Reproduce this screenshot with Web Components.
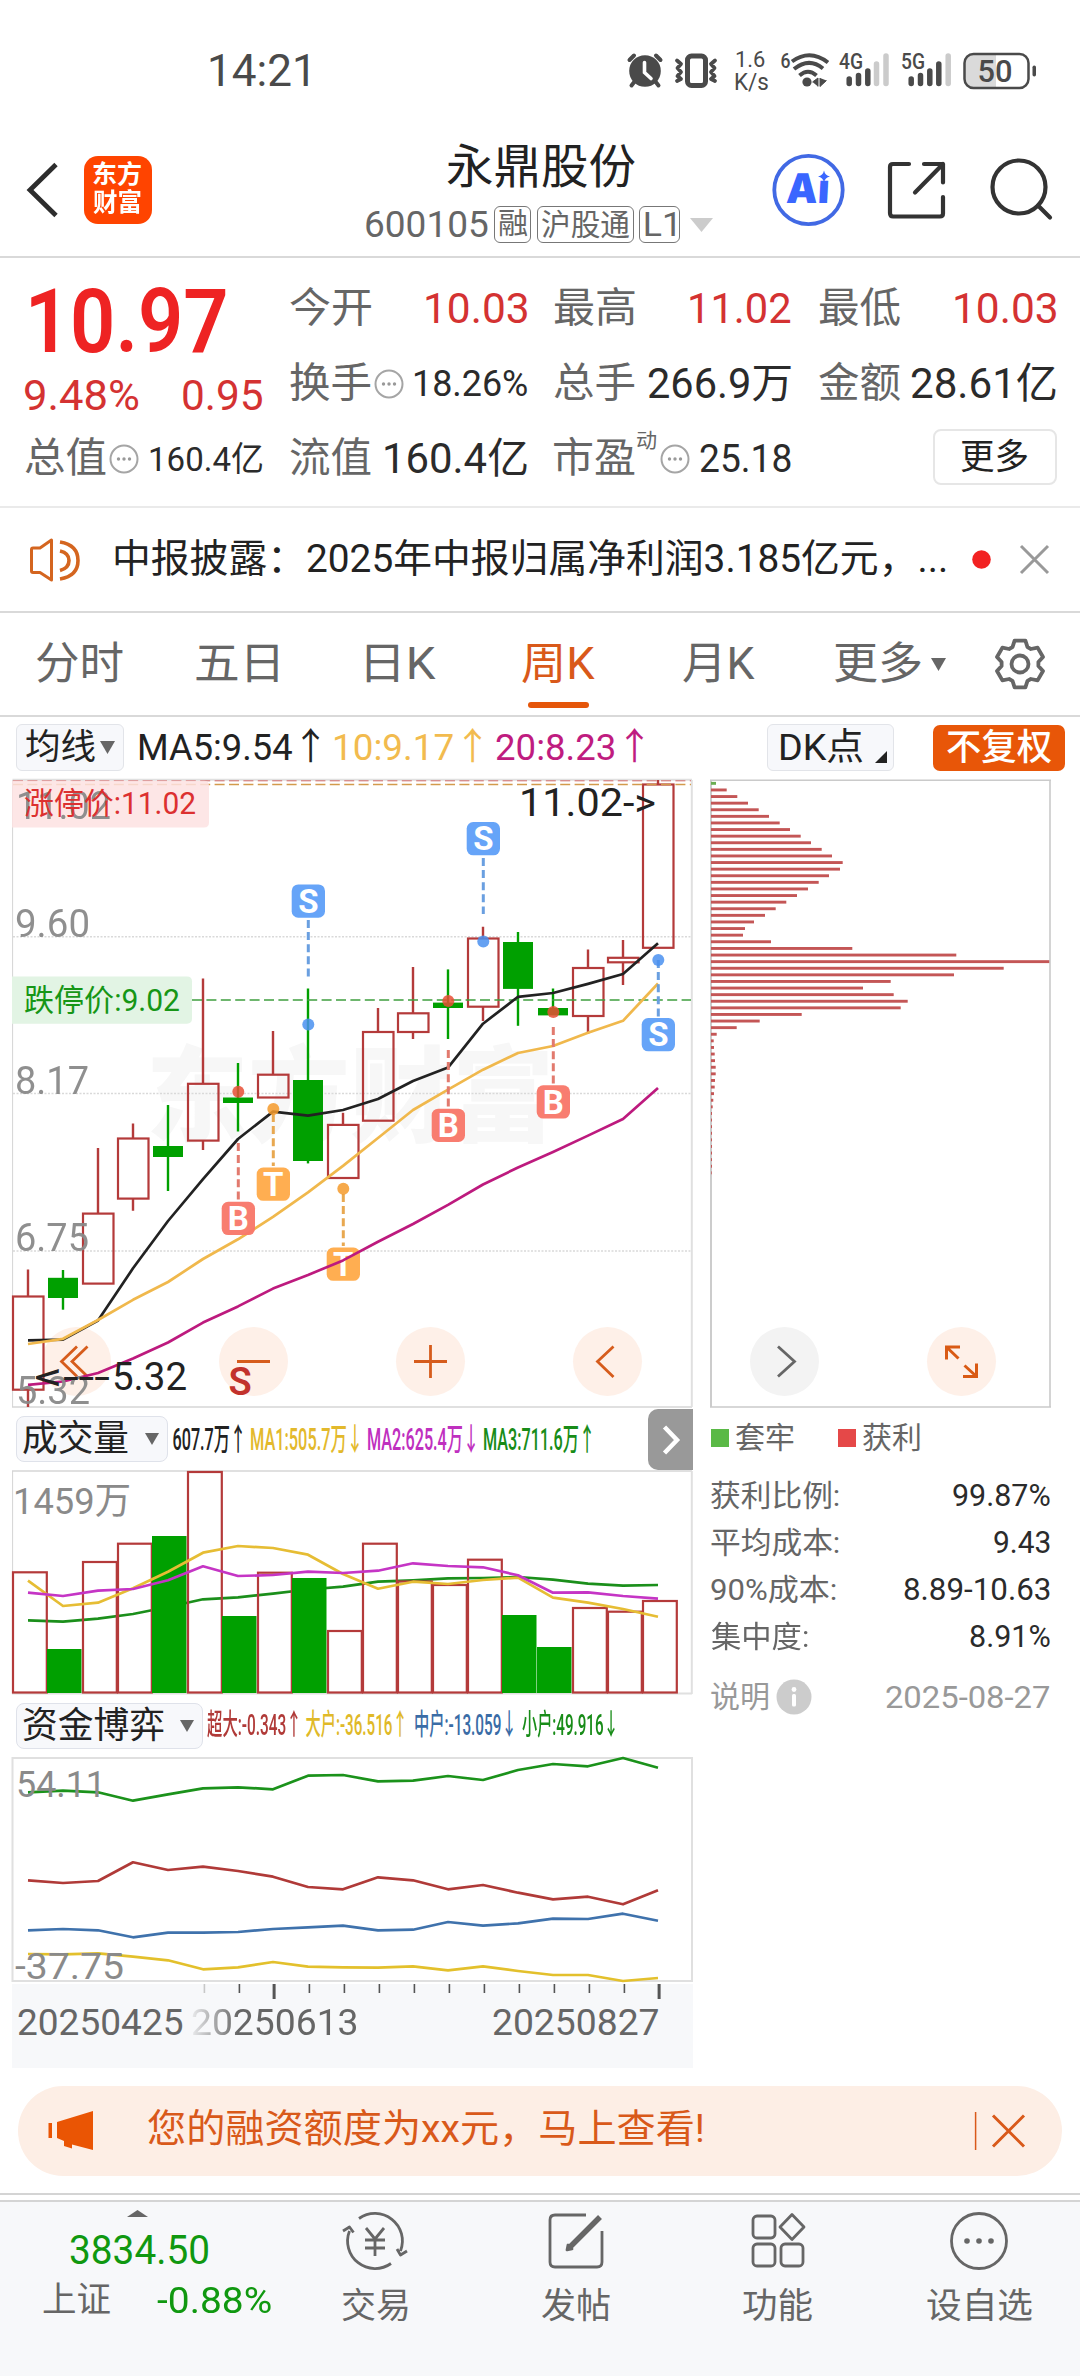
<!DOCTYPE html>
<html lang="zh-CN">
<head>
<meta charset="utf-8">
<title>永鼎股份 600105</title>
<style>
html,body{margin:0;padding:0;background:#fff}
body{width:1080px;height:2376px;overflow:hidden;font-family:Roboto,"Noto Sans CJK SC",sans-serif;color:#222}
</style>
</head>
<body>
<stock-app></stock-app>
<script>
const FONT='Roboto,"Noto Sans CJK SC",sans-serif';
const BASE=':host,*{box-sizing:border-box}svg{display:block;flex:none;overflow:visible}';
function define(name,html,init){
  customElements.define(name,class extends HTMLElement{
    connectedCallback(){
      if(this.shadowRoot)return;
      const r=this.attachShadow({mode:'open'});
      r.innerHTML=typeof html==='function'?html(this):html;
      if(init)init(this,r);
    }
  });
}
const ctx=document.createElement('canvas').getContext('2d');

/* Text whose visible ink is fitted to a width: w = width, s = size, g = gap before, c = colour, b = weight */
customElements.define('fit-text',class extends HTMLElement{
  connectedCallback(){
    if(this.shadowRoot)return;
    const a=k=>this.getAttribute(k),w=+a('w'),s=+a('s'),b=a('b')||400;
    const r=this.attachShadow({mode:'open'});
    const t=this.textContent.trim();
    ctx.font=`${b} ${s}px ${FONT}`;
    const m=ctx.measureText(t),ink=m.actualBoundingBoxRight+m.actualBoundingBoxLeft;
    const k=w/ink,dx=m.actualBoundingBoxLeft*k;
    r.innerHTML=`<style>:host{display:block;flex:none;width:${w}px;height:${s}px;margin-left:${a('g')||0}px;font-size:${s}px;line-height:${s}px;font-weight:${b};${a('c')?`color:${a('c')};`:''}white-space:nowrap}span{display:inline-block;transform-origin:0 0;transform:translateX(${dx}px) scaleX(${k})}</style><span><slot></slot></span>`;
  }
});

define('status-bar',`<style>${BASE}:host{display:flex;height:142px;padding-left:210px;align-items:center;color:#4a4a4a}
.k{display:flex;flex-direction:column;margin-left:17px}</style>
<fit-text w="98" s="44">14:21</fit-text>
<svg style="margin-left:318px" width="37" height="38" viewBox="625 51 37 38" fill="#4a4a4a"><circle cx="644" cy="70" r="15.8"/><g stroke="#4a4a4a" stroke-width="4" stroke-linecap="round"><path d="M628.500 59L633 54.500M659.500 59L655 54.500M634 80L630.500 84.500M654 80L657.500 84.500"/></g><path d="M643.500 61.500V71.500L650 77.500" stroke="#fff" stroke-width="3.600" fill="none" stroke-linecap="round"/></svg>
<svg style="margin-left:11px" width="44" height="38" viewBox="673 51 44 38" fill="none" stroke="#4a4a4a" stroke-width="3.800" stroke-linejoin="round" stroke-linecap="round"><rect x="686.500" y="55" width="18" height="29.500" rx="4" stroke-width="5"/><path d="M676 59.500L680 63L676.500 67L680 71L676.500 75L680 78L676 80M714 59.500L710 63L713.500 67L710 71L713.500 75L710 78L714 80"/></svg>
<div class="k"><fit-text w="29" s="22" g="1">1.6</fit-text><fit-text w="33" s="23">K/s</fit-text></div>
<svg style="margin-left:12px" width="50" height="38" viewBox="777 51 50 38" fill="none" stroke="#4a4a4a" stroke-width="4"><text x="777.500" y="67" font-family="Roboto" font-size="21" font-weight="500" fill="#4a4a4a" stroke="none" textLength="10" lengthAdjust="spacingAndGlyphs">6</text><path d="M789 60.500Q807 47.500 825 61.500M791 68Q806 56 820 67.500M796.500 74.500Q805 67 813.500 74.500"/><circle cx="804" cy="81" r="4.600" fill="#4a4a4a" stroke="none"/><path d="M809.500 81L815 77V85.500M817 77V85.500L823.500 79.500" fill="#4a4a4a" stroke-width="1"/></svg>
<svg style="margin-left:9px" width="51" height="38" viewBox="836 51 51 38"><text x="836" y="68" font-family="Roboto" font-size="22" font-weight="500" fill="#4a4a4a" textLength="24" lengthAdjust="spacingAndGlyphs">4G</text><g stroke="#4a4a4a" stroke-width="5.500" stroke-linecap="round"><path d="M846.200 78V82.500M855.500 74.500V82.500M864.800 70V82.500"/><path stroke="#cbcbcb" d="M873.500 63V82.500M883 55V82.500"/></g></svg>
<svg style="margin-left:11px" width="51" height="38" viewBox="898 51 51 38"><text x="898" y="68" font-family="Roboto" font-size="22" font-weight="500" fill="#4a4a4a" textLength="24" lengthAdjust="spacingAndGlyphs">5G</text><g stroke="#4a4a4a" stroke-width="5.500" stroke-linecap="round"><path d="M908.200 78V82.500M917.500 74.500V82.500M926.800 70V82.500M935.800 63V82.500"/><path stroke="#cbcbcb" d="M945.200 55V82.500"/></g></svg>
<svg style="margin-left:11px" width="74" height="38" viewBox="960 49.500 74 38"><path d="M970 52H993V85H970Q962 85 962 76V61Q962 52 970 52" fill="#dadada"/><rect x="961.500" y="51.500" width="64" height="34" rx="9" fill="none" stroke="#4a4a4a" stroke-width="2.500"/><rect x="1029.500" y="63" width="3.500" height="11" rx="1.700" fill="#4a4a4a"/><text x="974.500" y="79.500" font-family="Roboto" font-size="31" font-weight="500" fill="#4a4a4a" textLength="35" lengthAdjust="spacingAndGlyphs">50</text></svg>`);

define('tag-box',e=>`<style>:host{display:flex;height:37px;border:1.500px solid #777;border-radius:6px;align-items:center;justify-content:center;box-sizing:border-box;width:${e.getAttribute('w')}px}</style><slot></slot>`);

define('stock-header',`<style>${BASE}:host{display:flex;height:116px;border-bottom:2px solid #d9d9d9;padding:0 0 18px 27px;align-items:center}
.logo{margin-left:25px;width:68px;height:68px;border-radius:14px;background:#ff4400;color:#fff;padding:6px 0 0 9px;display:flex;flex-direction:column;gap:3px}
.mid{margin-left:212px;width:350px;height:100%;display:flex;flex-direction:column}
.sub{display:flex;align-items:center;gap:6px;color:#666;margin-top:16px}</style>
<svg width="32" height="56" viewBox="27 162 32 56"><path d="M56 164.500L30 190L56 215.500" fill="none" stroke="#2d2d2d" stroke-width="4.800"/></svg>
<div class="logo"><fit-text w="48" s="25" b="700">东方</fit-text><fit-text w="48" s="25" b="700">财富</fit-text></div>
<div class="mid"><fit-text w="188" s="47" g="83" c="#222" style="margin-top:1px">永鼎股份</fit-text>
<div class="sub"><fit-text w="122" s="37" g="2">600105</fit-text><tag-box w="37"><fit-text w="28" s="29">融</fit-text></tag-box><tag-box w="97"><fit-text w="88" s="30">沪股通</fit-text></tag-box><tag-box w="41" style="margin-left:-1px"><fit-text w="30" s="33">L1</fit-text></tag-box><svg style="margin-left:4px" width="23" height="14"><path d="M0 0H23L11.500 14Z" fill="#ccc"/></svg></div></div>
<svg style="margin-left:57px" width="74" height="74" viewBox="771 153 74 74"><circle cx="808.500" cy="190" r="34.200" fill="none" stroke="#4169e4" stroke-width="3.800"/><g transform="translate(10.5 0) skewX(-3)"><text x="786" y="203.500" font-family="Inter,Roboto" font-size="41" font-weight="900" fill="#3a66ff" textLength="43" lengthAdjust="spacingAndGlyphs">Aı</text></g><path d="M824 170.500Q825 175.500 830 176.500Q825 177.500 824 182.500Q823 177.500 818 176.500Q823 175.500 824 170.500Z" fill="#3a66ff"/></svg>
<svg style="margin-left:42px" width="60" height="60" viewBox="887 160.500 60 60" fill="none" stroke="#333" stroke-width="4.200" stroke-linecap="round" stroke-linejoin="round"><path d="M909 164.500H893Q890 164.500 890 167.500V213.500Q890 217 893 217H940Q943 217 943 214V197.500M924 164.500H943V183M943 164.500L915 193"/></svg>
<svg style="margin-left:43px" width="64" height="64" viewBox="990 158.500 64 64" fill="none" stroke="#333" stroke-width="4.200" stroke-linecap="round"><circle cx="1019" cy="187.500" r="26.500"/><path d="M1038 206L1050 218"/></svg>`);

const DOTS='<svg width="30" height="30" viewBox="0 0 30 30"><circle cx="15" cy="15" r="13.500" fill="none" stroke="#a5a5a5" stroke-width="2"/><g fill="#999"><circle cx="9.500" cy="15" r="1.700"/><circle cx="15" cy="15" r="1.700"/><circle cx="20.500" cy="15" r="1.700"/></g></svg>';
define('quote-cell',e=>{const g=k=>e.getAttribute(k);
return `<style>${BASE}:host{display:flex;align-items:center;justify-content:space-between;height:75px;color:#666}
.l{display:flex;align-items:center}.sup{align-self:flex-start;margin:-7px 0 0 2px}</style><div class="l"><fit-text w="81" s="41">${g('label')}</fit-text>${g('sup')?`<fit-text class="sup" w="19" s="20">${g('sup')}</fit-text>`:''}${e.hasAttribute('info')?`<div style="margin-left:${g('info')}px">${DOTS}</div>`:''}</div><fit-text w="${g('vw')}" s="${g('vs')||42}" c="${g('vc')||'#2b2b2b'}">${g('value')}</fit-text>`});

define('quote-panel',`<style>${BASE}:host{display:flex;height:250px;border-bottom:2px solid #eaeaea;padding:13px 24px 0 25px;gap:27.500px}
.c{width:237px;flex:none;display:flex;flex-direction:column}.p{height:100px;display:flex;align-items:center;color:#ee2323}
.q{height:50px;display:flex;align-items:center;justify-content:space-between;color:#d43232}
.more{width:124px;height:56px;border:2px solid #e6e6e6;border-radius:8px;align-self:flex-end;margin:8px -1px 0 0;display:flex;align-items:center;justify-content:center}</style>
<div class="c"><div class="p"><fit-text w="195" s="89" b="600" g="6">10.97</fit-text></div><div class="q"><fit-text w="113" s="42">9.48%</fit-text><fit-text w="79" s="42">0.95</fit-text></div><quote-cell label="总值" info="3" value="160.4亿" vw="112" vs="34"></quote-cell></div>
<div class="c"><quote-cell label="今开" value="10.03" vw="101" vc="#d43232"></quote-cell><quote-cell label="换手" info="3" value="18.26%" vw="112" vs="36"></quote-cell><quote-cell label="流值" value="160.4亿" vw="142"></quote-cell></div>
<div class="c"><quote-cell label="最高" value="11.02" vw="101" vc="#d43232"></quote-cell><quote-cell label="总手" value="266.9万" vw="143"></quote-cell><quote-cell label="市盈" sup="动" info="4" value="25.18" vw="91" vs="38"></quote-cell></div>
<div class="c"><quote-cell label="最低" value="10.03" vw="101" vc="#d43232"></quote-cell><quote-cell label="金额" value="28.61亿" vw="145"></quote-cell><div class="more"><fit-text w="67" s="35" c="#222">更多</fit-text></div></div>`);

define('notice-bar',`<style>${BASE}:host{display:flex;height:105px;border-bottom:2px solid #d9d9d9;padding:0 30px 0 28px;align-items:center}</style>
<svg width="54" height="46" viewBox="28 536 54 46" fill="none" stroke="#d4651f" stroke-width="3" stroke-linejoin="round"><path d="M31.500 548.500Q31.500 547 33 547H40L51.500 539V579L40 571.500H33Q31.500 571.500 31.500 570Z"/><path d="M60 541Q78 544 78 559.500Q78 575 60 578M60 550Q69 552 69 559.500Q69 567 60 569.500" stroke-width="3.600"/></svg>
<fit-text w="831" s="38.500" g="33" c="#222">中报披露：2025年中报归属净利润3.185亿元，...</fit-text>
<svg style="margin-left:26px" width="19" height="19"><circle cx="9.500" cy="9.500" r="9.300" fill="#f22222"/></svg>
<svg style="margin-left:28px" width="31" height="31" viewBox="0 0 31 31"><path d="M2 2L29 29M29 2L2 29" stroke="#999" stroke-width="3"/></svg>`);

let gear='';
for(let k=0;k<6;k++)for(const [r,d] of [[18.5,-24],[24,-13],[24,13],[18.5,24]]){const t=(k*60-90+d)*Math.PI/180;gear+=(gear?'L':'M')+(27+r*Math.cos(t)).toFixed(1)+' '+(27+r*Math.sin(t)).toFixed(1);}
define('period-tabs',`<style>${BASE}:host{display:flex;height:104px;border-bottom:2px solid #d9d9d9;padding:0 0 0 36px;align-items:center;color:#666}
.on{position:relative;margin-left:86px}.on fit-text{color:#d9591a}.on i{position:absolute;left:6px;top:60px;width:61px;height:6px;border-radius:3px;background:#e5560a}</style>
<fit-text w="87" s="44">分时</fit-text><fit-text w="82" s="44" g="73">五日</fit-text><fit-text w="70" s="44" g="88">日K</fit-text><div class="on"><fit-text w="73" s="44">周K</fit-text><i></i></div><fit-text w="72" s="44" g="88">月K</fit-text><fit-text w="86" s="44" g="80">更多</fit-text><svg style="margin-left:10px" width="15" height="13"><path d="M0 0H15L7.500 13Z" fill="#666"/></svg>
<svg style="margin-left:47px" width="54" height="54" viewBox="0 0 54 54" fill="none" stroke="#666" stroke-width="3.800" stroke-linejoin="round"><path d="${gear}Z"/><circle cx="27" cy="27" r="8.500"/></svg>`);

define('ma-bar',`<style>${BASE}:host{display:flex;height:61px;padding-left:16px;align-items:center}
.b{height:47px;background:#f7f8fb;border:1.500px solid #e2e4e9;border-radius:6px;display:flex;align-items:center;flex:none}
.x{margin-left:39px;width:132px;height:46px;border-radius:7px;background:#e85608;display:flex;align-items:center;justify-content:center}</style>
<div class="b" style="width:108px;padding-left:9px"><fit-text w="69" s="35">均线</fit-text><svg style="margin-left:5px" width="15" height="13"><path d="M0 0H15L7.500 13Z" fill="#666"/></svg></div>
<fit-text w="180" s="37" g="16" c="#222">MA5:9.54↑</fit-text><fit-text w="147" s="37" g="15" c="#f2bb4e">10:9.17↑</fit-text><fit-text w="148" s="37" g="14" c="#bf1c80">20:8.23↑</fit-text>
<div class="b" style="width:127px;margin-left:123px;padding-left:13px"><fit-text w="82" s="37">DK点</fit-text><svg style="margin:18px 0 0 12px" width="12" height="12"><path d="M12 0V12H0Z" fill="#222"/></svg></div>
<div class="x"><fit-text w="104" s="36" c="#fff" b="500">不复权</fit-text></div>`);

const X=i=>28+35*i;
const line=(ys,c,w=2.7)=>`<polyline fill="none" stroke="${c}" stroke-width="${w}" stroke-linejoin="round" points="${ys.map((y,i)=>X(i)+','+y).join(' ')}"/>`;
const T=(x,y,s,w,t,c='#8a8a8a',b=400)=>`<text x="${x}" y="${y}" font-size="${s}" font-weight="${b}" fill="${c}" textLength="${w}" lengthAdjust="spacingAndGlyphs">${t}</text>`;
const SVGCSS=`<style>${BASE}:host{display:block}text{font-family:${FONT}}</style>`;

/* [up, high, top, bottom, low] */
const K=[[1,1269.5,1296.5,1389.7,1407],[0,1270,1277.8,1298,1309.7],[1,1148,1213.6,1283.6,1283],[1,1123.6,1138.5,1198.6,1210.7],[0,1105,1146,1157,1191],[1,978.5,1083.8,1140.6,1150],[0,1063,1097.5,1103,1131.5],[1,1031,1074.7,1097.5,1097],[0,988.5,1080,1161,1163.4],[1,1112.8,1124.9,1178,1178],[1,1008,1032,1120.7,1120],[1,967,1013.3,1032,1039],[0,969.4,1002.6,1008,1039],[1,926.7,938.5,1006.7,1021],[0,932,942,988.9,1025.8],[0,988.5,1008,1015.4,1015],[1,949.5,968,1016,1034],[1,940,957.8,962.3,985],[1,780,784.5,947.8,947]];
const C1='#b43a3a',G1='#00a000';
function candles(){return K.map(([u,h,t,b,l],i)=>{const x=X(i),c=u?C1:G1;
 return u?`<path d="M${x} ${h}V${t}M${x} ${b}V${l}" stroke="${c}" stroke-width="2.400"/><rect x="${x-15}" y="${t}" width="30.500" height="${b-t}" fill="none" stroke="${c}" stroke-width="2.200"/>`
 :`<path d="M${x} ${h}V${l}" stroke="${c}" stroke-width="2.400"/><rect x="${x-15}" y="${t}" width="30" height="${b-t}" fill="${c}"/>`}).join('')}
/* [index, letter, colour, line colour, badge top, line from, line to, dot] */
const MARKS=[[8,'S','#60a0f8','#6a9fe0',884.4,920,977,1024.5],[13,'S','#60a0f8','#6a9fe0',822,858,914,941.6],[6,'B','#f8786a','#e27a6e',1201.8,1143,1200,1091.7],[7,'T','#ffab4a','#e8a850',1167.5,1114,1166,1109],[9,'T','#ffab4a','#e8a850',1247.5,1194,1246,1188.7],[12,'B','#f8786a','#e27a6e',1108.7,1050,1107,1001],[15,'B','#f8786a','#e27a6e',1085.3,1027,1084,1012],[18,'S','#60a0f8','#6a9fe0',1018,960,1017,960]];
const marks=MARKS.map(([i,t,c,lc,y,a,b,d])=>{const x=X(i)+.3,dc={S:'#4a90f0',B:'#e84f35',T:'#f59a2a'}[t];
 return `<path d="M${x} ${a}V${b}" stroke="${lc}" stroke-width="3" stroke-dasharray="8 4.100"/><circle cx="${x}" cy="${d}" r="6" fill="${dc}" fill-opacity=".85"/><rect x="${x-16.6}" y="${y}" width="33.300" height="33.300" rx="6.500" fill="${c}" fill-opacity=".96"/><text x="${x}" y="${y+28.3}" font-size="33" font-weight="700" fill="#fff" text-anchor="middle">${t}</text>`}).join('');
const circ=(x,c='#fef0e8')=>`<circle cx="${x}" cy="1361.500" r="34.500" fill="${c}"/>`;

define('k-chart',`${SVGCSS}<svg width="682" height="630" viewBox="12 778 682 630">
${T(146,1134,104,408,'东方财富','#f7f7f7',900)}
${[936.7,1093.6,1251].map(y=>`<path d="M13 ${y}H691" stroke="#d9d9d9" stroke-width="1.500" stroke-dasharray="2 1.500"/>`).join('')}
<path d="M12.500 779.800H692M691.800 780V1407M12 1407H692" fill="none" stroke="#e0e0e0" stroke-width="2"/><path d="M12.600 780V1407" stroke="#d4d4d4"/>
${circ(76.5)}${circ(253.5)}${circ(430.5)}${circ(607.5)}
${candles()}
<path d="M13 780.800H691" stroke="#cf6a6a" stroke-width="1" stroke-dasharray="10 4.400"/><path d="M13 784.500H691" stroke="#d39a4c" stroke-width="1.300" stroke-dasharray="10 4.400"/><path d="M192 1000H691" stroke="#3f9f3f" stroke-width="1.300" stroke-dasharray="10 4.400"/>
${line([1340.4,1339.6,1320.5,1268.3,1221,1179.2,1139,1111.6,1115.7,1110,1099,1081,1067.6,1023.7,996.8,993,983.9,974,943.3],'#222')}
${line([1344,1338.8,1320,1299.8,1282,1259,1239.3,1216.9,1192.4,1165.9,1138,1110,1089.6,1069.7,1053,1046,1032.8,1020.8,983.5],'#f0b84c')}
<path d="M12 780.800H204Q209 780.800 209 786V822.500Q209 827.600 204 827.600H12Z" fill="#fde2e2" fill-opacity=".85"/><path d="M12 976.500H187Q192 976.500 192 981.500V1018.600Q192 1023.700 187 1023.700H12Z" fill="#e2f4e4"/>
<g fill="none" stroke="#d65c1c" stroke-width="2.800"><path d="M77 1346.500L61.500 1361.500L77 1376.500M87.500 1346.500L72 1361.500L87.500 1376.500M237 1361.500H270M414 1361.500H447M430.500 1345V1378M613.500 1346.500L597.500 1361.500L613.500 1377"/></g>
${marks}
${line([1384.8,1381.5,1373,1358.6,1342.5,1322.6,1306.4,1288.6,1275,1260.4,1241.7,1224,1204.9,1184.5,1167.5,1152,1135.6,1119,1088],'#bd1a7e')}
<g opacity=".95">${T(16,818.500,39,95,'11.02')}${T(15,937,39,75,'9.60')}${T(15,1094,39,74,'8.17')}${T(15,1251,39,74,'6.75')}${T(16,1403.500,39,74,'5.32')}</g>
${T(24,814,30.500,172,'涨停价:11.02','#dc3030')}${T(24,1011,30.500,156,'跌停价:9.02','#169616')}
${T(519,816,39,137,'11.02-&gt;','#222')}
${T(34,1390,39,76,'&lt;---','#222')}${T(112,1390,39,75,'5.32','#222')}
<text x="228.500" y="1395" font-size="38" font-weight="600" fill="#c2322c">S</text>
</svg>`);

const CH=[78,110,142,174,206,237,269,300,332,363,395,426,458,450,417,386,354,321,289,257,225,192,165,159,243,487,799,1080,941,792,602,519,611,653,632,335,209,140,80,71,72,74,75,77,77,75,74,72,70,68,66,66,66,66,66,66,66,66,66,65];
define('chip-chart',`${SVGCSS}<svg width="342" height="630" viewBox="710 778 342 630">
<path d="M711 780.500V1407" stroke="#ccc" stroke-width="2"/>
${CH.map((v,i)=>`<rect x="711" y="${(781.9+6.602*i).toFixed(1)}" width="${((v-63)/3).toFixed(1)}" height="2.900" fill="${i?'#c45656':'#6aad52'}"/>`).join('')}
<path d="M710 780.300H1051M1050 780V1407M710 1407H1051" fill="none" stroke="#cacaca" stroke-width="1.600"/>
${circ(784.5,'#f3f3f3')}${circ(961.5)}
<path d="M778 1346.500L794.500 1361.500L778 1376.500" fill="none" stroke="#666" stroke-width="2.800"/>
<g fill="none" stroke="#d95a14" stroke-width="3"><path d="M946.500 1359.500V1347H960M947 1347.500L958.500 1358.500M963 1376.500H976.500V1363.500M964.500 1365.500L976 1376"/></g></svg>`);

define('indicator-head',e=>`<style>${BASE}:host{display:flex;align-items:center;height:62px;padding-left:4px;position:relative}
.b{height:46px;width:${e.getAttribute('bw')}px;background:#f7f8fb;border:1.500px solid #dfe2ea;border-radius:8px;display:flex;align-items:center;justify-content:space-between;padding:0 8px 0 6px;flex:none}</style><div class="b"><fit-text w="${e.getAttribute('tw')}" s="36">${e.getAttribute('name')}</fit-text><svg width="14" height="12"><path d="M0 0H14L7 12Z" fill="#666"/></svg></div><slot></slot>`);

const V=[[1,1572.3],[0,1649],[1,1562],[1,1543.7],[0,1536],[1,1472],[0,1616],[1,1572.7],[0,1578],[1,1631],[1,1543.7],[1,1581.5],[1,1585],[1,1559.7],[0,1615],[0,1647],[1,1608],[1,1611.7],[1,1601]];
define('volume-chart',`${SVGCSS}<svg width="682" height="224" viewBox="12 1470 682 224">
<path d="M12 1471H692M691.800 1471V1694M12 1693.500H692" fill="none" stroke="#e0e0e0" stroke-width="2"/><path d="M12.600 1471V1693" stroke="#d4d4d4"/>
${line([1620.3,1621.7,1618.7,1614,1607,1599.3,1597.3,1593.7,1589.5,1586.7,1581.7,1580.3,1578.3,1578,1577,1579.7,1583.7,1585.7,1585],'#1b8f1b')}
${V.map(([u,t],i)=>u?`<rect x="${13+35*i}" y="${t}" width="33.800" height="${1692.5-t}" fill="none" stroke="${C1}" stroke-width="2.200"/>`:`<rect x="${12+35*i}" y="${t}" width="34.500" height="${1693-t}" fill="${G1}"/>`).join('')}
${line([1580.7,1606,1602.7,1588.3,1571.7,1552.7,1546,1548,1554.7,1574,1588.7,1581.7,1584,1580,1577.7,1597.7,1602.7,1609,1616.7],'#e6bd34')}
${line([1592.7,1596,1590.7,1589,1580.3,1566.3,1576,1575,1571.7,1573,1570.7,1563.3,1566,1567.3,1575.3,1592.7,1592.3,1596,1598.7],'#c535c5')}
${T(13,1514,37,118,'1459万')}</svg>`);

define('fund-chart',`${SVGCSS}<svg width="682" height="227" viewBox="12 1757 682 227">
<rect x="12.500" y="1758" width="679.500" height="223" fill="none" stroke="#e0e0e0" stroke-width="2"/>
${line([1792.3,1790.7,1792.3,1800.7,1794.3,1788.3,1787.3,1789.3,1775.7,1775,1781.3,1780.7,1776,1780,1770,1764,1766.3,1758,1767.7],'#1b921b')}
${line([1880.3,1883,1881,1862.3,1870,1866.7,1871,1876.7,1887,1889.3,1877.3,1880.3,1889.3,1885,1892.7,1899.3,1896.7,1904.3,1890.3],'#b03a38')}
${line([1930.3,1929,1930.3,1937.3,1932.7,1932.7,1932,1929,1927.3,1925.7,1930.3,1929.7,1922,1925.7,1923.3,1918.7,1919,1913.7,1920.7],'#3f72ac')}
${line([1954,1954.3,1953.3,1956.7,1960.3,1969.3,1967.3,1962,1966.7,1967.3,1967.7,1966.3,1970.3,1966.3,1971,1975,1975,1981,1978],'#e3c02c')}
${T(16,1796.500,37,90,'54.11')}${T(15,1978.500,37,109,'-37.75')}</svg>`);

define('time-axis',`<style>${BASE}:host{display:block;width:681px;height:84px;background:#f7f8fa}.t{display:flex;color:#666;margin-top:5px;padding-left:6px}
.f{-webkit-mask-image:linear-gradient(90deg,rgba(0,0,0,.1),#000 28%);mask-image:linear-gradient(90deg,rgba(0,0,0,.1),#000 28%)}</style>
<svg width="681" height="16" viewBox="12 1984 681 16">${Array.from({length:14},(_,j)=>{const i=j+5,m=i==7||i==18;return `<rect x="${X(i)+.8-(m?1.2:.2)}" y="1984" width="${m?3:1.6}" height="${m?15:9}" fill="${j?'#555':'#c8c8c8'}"/>`}).join('')}</svg>
<div class="t"><fit-text w="165" s="36.500">20250425</fit-text><fit-text class="f" w="165" s="36.500" g="9">20250613</fit-text><fit-text w="165" s="36.500" g="136">20250827</fit-text></div>`);

define('stat-row',e=>`<style>:host{display:flex;justify-content:space-between;align-items:center;height:47px;color:#666}</style><fit-text w="${e.getAttribute('lw')}" s="30">${e.getAttribute('label')}</fit-text><fit-text w="${e.getAttribute('vw')}" s="31" c="#2b2b2b">${e.getAttribute('value')}</fit-text>`);
define('chip-stats',`<style>${BASE}:host{display:block;width:340px;padding-left:1px;color:#666}.g{display:flex;align-items:center;height:60px;margin-bottom:4px}.g i{width:18px;height:18px}.n{display:flex;align-items:center;height:40px;margin-top:17px;color:#999}</style>
<div class="g"><i style="background:#5ab946"></i><fit-text w="58" s="30" g="7">套牢</fit-text><i style="background:#e54848;margin-left:44px"></i><fit-text w="57" s="30" g="7">获利</fit-text></div>
<stat-row label="获利比例:" lw="128" value="99.87%" vw="97"></stat-row><stat-row label="平均成本:" lw="128" value="9.43" vw="56"></stat-row><stat-row label="90%成本:" lw="125" value="8.89-10.63" vw="146"></stat-row><stat-row label="集中度:" lw="97" value="8.91%" vw="80"></stat-row>
<div class="n"><fit-text w="57" s="30">说明</fit-text><svg style="margin-left:8px" width="36" height="36"><circle cx="18" cy="18" r="17.500" fill="#ccc"/><circle cx="18" cy="10.500" r="2.400" fill="#fff"/><rect x="16" y="15" width="4" height="12.500" rx="1.500" fill="#fff"/></svg><fit-text w="164" s="31" g="74">2025-08-27</fit-text></div>`);

define('chart-area',`<style>${BASE}:host{display:flex;gap:16px;padding-left:12px;height:1290px}.l{width:682px;display:flex;flex-direction:column}
.ex{position:absolute;right:1px;top:1px;width:45px;height:61px;border-radius:10px 0 0 10px;background:#999;display:flex;align-items:center;justify-content:center}</style>
<div class="l"><k-chart></k-chart>
<indicator-head bw="152" tw="105" name="成交量"><fit-text w="69" s="31" g="5" b="500" c="#222">607.7万↑</fit-text><fit-text w="108" s="31" g="9" b="500" c="#e3b92c">MA1:505.7万↓</fit-text><fit-text w="107" s="31" g="9" b="500" c="#bf30bf">MA2:625.4万↓</fit-text><fit-text w="107" s="31" g="9" b="500" c="#188c18">MA3:711.6万↑</fit-text><div class="ex"><svg width="20" height="32" viewBox="0 0 20 32"><path d="M3.500 3L16 16L3.500 29" fill="none" stroke="#fff" stroke-width="4.500"/></svg></div></indicator-head>
<volume-chart></volume-chart>
<indicator-head bw="187" tw="141" name="资金博弈" style="height:63px"><fit-text w="91" s="29" g="4" b="500" c="#b03a38">超大:-0.343↑</fit-text><fit-text w="98" s="29" g="8" b="500" c="#e0b928">大户:-36.516↑</fit-text><fit-text w="98" s="29" g="11" b="500" c="#3a6ca6">中户:-13.059↓</fit-text><fit-text w="93" s="29" g="9" b="500" c="#188c18">小户:49.916↓</fit-text></indicator-head>
<fund-chart></fund-chart><time-axis></time-axis></div>
<div><chip-chart></chip-chart><chip-stats></chip-stats></div>`);

define('promo-banner',`<style>${BASE}:host{display:flex;align-items:center;margin:18px 18px 17px;height:90px;border-radius:45px;background:#fdeee5;padding-left:30px}</style>
<svg width="46" height="40" viewBox="48 2111 46 40" fill="#ea5504"><rect x="48.500" y="2123" width="3.500" height="15"/><path d="M57 2122L93 2111V2150L72 2144.500V2148.500L64 2146V2141L57 2138Z"/></svg>
<fit-text w="555" s="38.500" g="54" c="#d9591a" style="margin-top:-3px">您的融资额度为xx元，马上查看!</fit-text>
<svg style="margin-left:271px" width="52" height="38" viewBox="973 2112 52 38" stroke="#d9591a" fill="none"><path d="M974.600 2112V2150" stroke-width="1.500"/><path d="M992 2115.500L1023 2146.500M1023 2115.500L992 2146.500" stroke-width="3"/></svg>`);

define('nav-item',e=>`<style>:host{display:flex;flex-direction:column;align-items:center;width:201.500px;padding-top:8px;gap:17px;box-sizing:border-box;color:#666}</style><slot></slot><fit-text w="${e.getAttribute('w')}" s="35">${e.getAttribute('label')}</fit-text>`);
const nv='width="66" height="62" viewBox="-33 -31 66 62" style="display:block;fill:none;stroke:#666;stroke-width:2.800;stroke-linejoin:round"';
define('bottom-nav',`<style>${BASE}:host{display:block;border-top:2px solid #d4d4d4;height:184px}.w{margin-top:5px;border-top:2px solid #d4d4d4;background:#f7f8fa;height:177px;display:flex}
.i{width:275px;display:flex;flex-direction:column;padding-top:8px}.r{display:flex;align-items:center}.n{display:flex;flex:1}</style>
<div class="w"><div class="i"><svg style="margin-left:127px" width="21" height="7"><path d="M10.500 0L21 7H0Z" fill="#666"/></svg><fit-text w="138" s="41" g="70" c="#109810" style="margin-top:13px">3834.50</fit-text><div class="r" style="margin:11px 0 0 43px;color:#666"><fit-text w="67" s="35">上证</fit-text><fit-text w="114" s="37" g="47" c="#109810">-0.88%</fit-text></div></div>
<div class="n"><nav-item label="交易" w="66"><svg ${nv}><path d="M-16 -22.500A27.500 27.500 0 0 1 25.500 10M16 22.500A27.500 27.500 0 0 1 -25.500 -10M-32 -10L-25.500 -14L-21.500 -8.500M32 10L25.500 14L22 8M-9 -13L0 -2L9 -13M-10 -1H10M-10 7H10M0 -2V15"/></svg></nav-item>
<nav-item label="发帖" w="68"><svg ${nv}><path d="M10 -26H-21Q-26 -26 -26 -21V21Q-26 26 -21 26H21Q26 26 26 21V-10"/><path d="M24 -24L-7 7" stroke-width="5.500"/><path d="M-8 4L-9 9L-4 8Z"/></svg></nav-item>
<nav-item label="功能" w="69"><svg ${nv}><rect x="-25" y="-25" width="22" height="22" rx="4"/><rect x="-25" y="3" width="22" height="22" rx="4"/><rect x="3" y="3" width="22" height="22" rx="4"/><path d="M14 -26.500L26 -14L14 -1.500L2 -14Z"/></svg></nav-item>
<nav-item label="设自选" w="105"><svg ${nv}><circle r="27.500"/><g fill="#666" stroke="none"><circle cx="-12" r="2.800"/><circle r="2.800"/><circle cx="12" r="2.800"/></g></svg></nav-item></div></div>`);

define('stock-app',`<style>:host{display:flex;flex-direction:column;width:1080px;height:2376px;background:#fff}:host>*,status-bar,stock-header,quote-panel,notice-bar,period-tabs,ma-bar,chart-area,promo-banner,bottom-nav{flex:none}</style>
<status-bar></status-bar><stock-header></stock-header><quote-panel></quote-panel><notice-bar></notice-bar><period-tabs></period-tabs><ma-bar></ma-bar><chart-area></chart-area><promo-banner></promo-banner><bottom-nav></bottom-nav>`);
</script>
</body>
</html>
